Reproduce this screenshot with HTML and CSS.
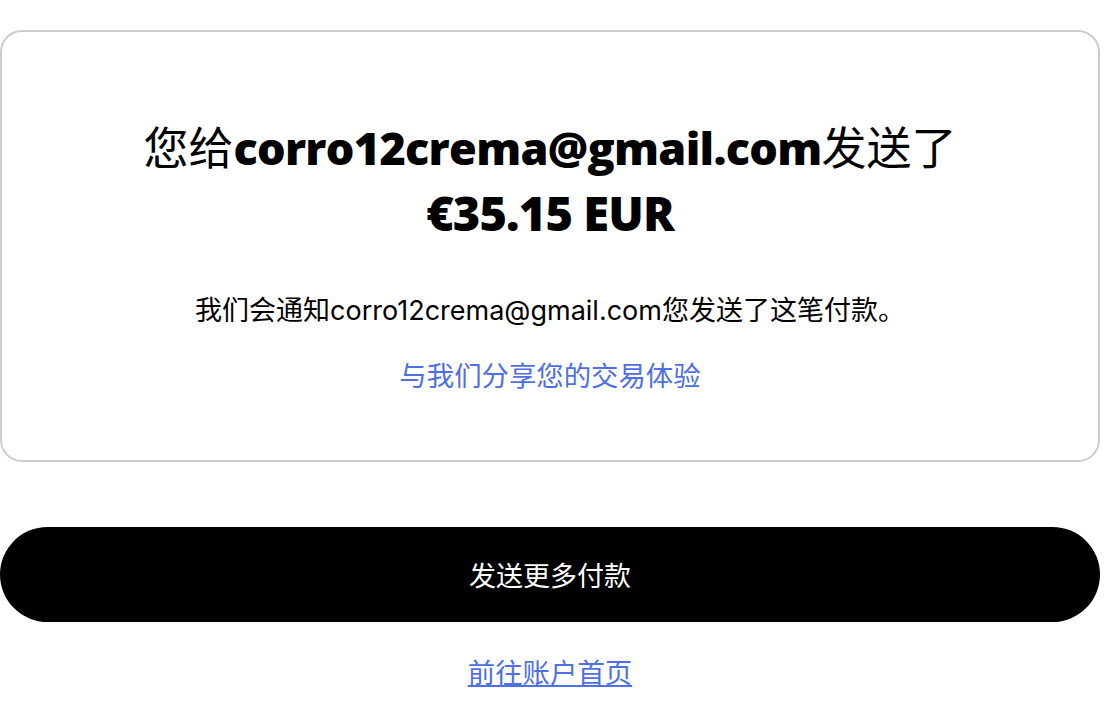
FILE: index.html
```html
<!DOCTYPE html>
<html lang="zh-CN">
<head>
    <meta charset="UTF-8">
    <title>付款已发送</title>
    <link rel="stylesheet" href="styles.css">
</head>
<body>
    <div class="page">
        <div class="card">
            <h1 class="title">您给<b class="email">corro12crema@gmail.com</b>发送了<br><b class="amount">€35.15 EUR</b></h1>
            <p class="note">我们会通知corro12crema@gmail.com您发送了这笔付款。</p>
            <a class="share" href="#">与我们分享您的交易体验</a>
        </div>
        <button type="button" class="send-more">发送更多付款</button>
        <a class="home" href="#">前往账户首页</a>
    </div>
</body>
</html>
```

FILE: styles.css
```css
body {
    margin: 0;
    background: white;
    color: black;
    font-family: "Inter", "Noto Sans CJK SC", sans-serif;
}
.page {
    display: flex;
    flex-direction: column;
    align-items: center;
    width: 1100px;
    padding-top: 30px;
}
.card {
    box-sizing: border-box;
    width: 100%;
    display: flex;
    flex-direction: column;
    align-items: center;
    border: 2px solid #cccccc;
    border-radius: 22px;
    padding: 82px 40px 68px;
    text-align: center;
}
.title {
    margin: 0;
    font-family: "Noto Sans CJK SC", sans-serif;
    font-weight: 400;
    font-size: 45px;
    line-height: 64px;
}
.title b {
    font-family: "Open Sans", "Noto Sans CJK SC", sans-serif;
    font-weight: 800;
}
.email {
    font-size: 45px;
    letter-spacing: -0.7px;
}
.amount {
    font-size: 47px;
    letter-spacing: -0.9px;
}
.note {
    margin: 48px 0 0;
    font-size: 27px;
    line-height: 36px;
}
.share {
    margin-top: 27px;
    font-family: "Noto Sans CJK SC", sans-serif;
    font-size: 27.4px;
    line-height: 36px;
    color: #4f6fe6;
    text-decoration: none;
}
.send-more {
    margin-top: 65px;
    width: 100%;
    height: 95px;
    border: none;
    border-radius: 48px;
    background: black;
    color: white;
    font-family: "Noto Sans CJK SC", sans-serif;
    font-size: 27px;
}
.home {
    margin-top: 31px;
    font-size: 27.4px;
    line-height: 36px;
    color: #4f6fe6;
    font-family: "Noto Sans CJK SC", sans-serif;
}
```
